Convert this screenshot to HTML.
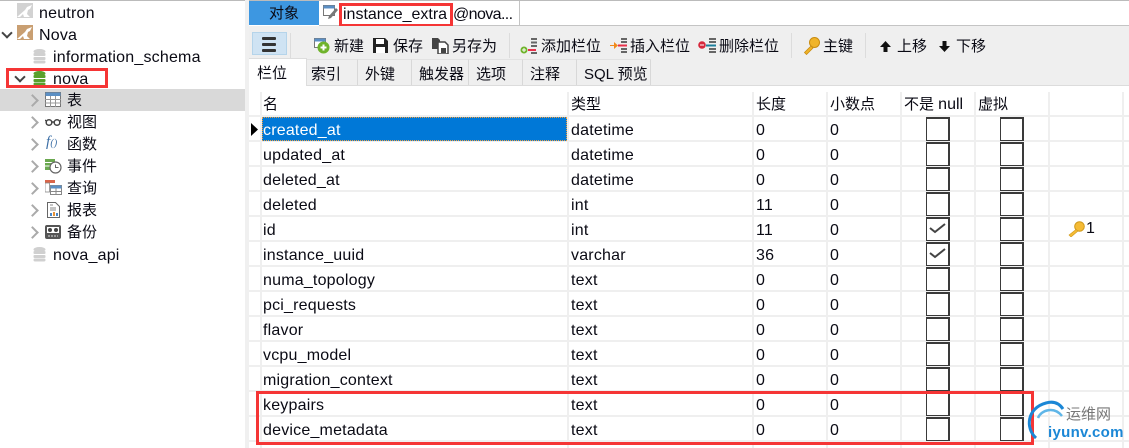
<!DOCTYPE html>
<html><head><meta charset="utf-8"><style>
html,body{margin:0;padding:0;background:#fff}
#p{position:relative;width:1129px;height:448px;overflow:hidden;background:#fff;font:16px "Liberation Sans","Noto Sans CJK SC",sans-serif;color:#0a0a14}
#p div,#p span,#p svg{position:absolute}
.t{white-space:nowrap;line-height:20px;height:20px;letter-spacing:.2px}
.z{font-size:15px;letter-spacing:0;margin-top:1px}
.h{height:2px;background:#efefef;left:249px;width:880px}
.v{width:2px;background:#efefef;top:92px;height:356px}
.cb{width:21px;height:21px;border:solid #3a3a3a;border-width:2px 2px 1px 1px;background:#fff;left:926px}
.cb2{left:1000px}
.tab{top:59px;height:26px;background:#efefef;border-right:1px solid #d8d8d8;border-top:1px solid #e2e2e2;box-sizing:border-box;text-align:left;line-height:29px;font-size:15px}
.chev{width:7px;height:7px;border-right:2px solid #aaa;border-bottom:2px solid #aaa;transform:rotate(-45deg);left:28px}
.down{width:6px;height:6px;border-right:2px solid #444;border-bottom:2px solid #444;transform:rotate(45deg)}
.red{border:3px solid #f53535;box-sizing:border-box}
</style></head><body><div id="p">

<!-- sidebar -->
<div style="left:0;top:0;width:245px;height:1px;background:#bbb"></div>
<div style="left:0;top:89px;width:245px;height:22px;background:#d9d9d9"></div>
<div style="left:245px;top:0;width:4px;height:448px;background:#f0f0f0"></div>

<svg style="left:17px;top:3px" width="17" height="16"><rect width="16" height="15" y="0" fill="#d2d2d2"/><path d="M0 14l8-7 2-3 5-2-2 4-2 1-1 4 3 3H7l-1-3-3 3z" fill="#fff"/></svg>
<span class="t" style="left:39px;top:4px">neutron</span>
<div class="down" style="left:3px;top:29px"></div>
<svg style="left:17px;top:25px" width="17" height="16"><rect width="16" height="15" fill="#c99f72"/><path d="M0 14l8-7 2-3 5-2-2 4-2 1-1 4 3 3H7l-1-3-3 3z" fill="#fff"/></svg>
<span class="t" style="left:39px;top:26px">Nova</span>

<svg style="left:33px;top:49px" width="13" height="15"><ellipse cx="6.500" cy="2.500" rx="6" ry="2.500" fill="#d0d0d0"/><rect x=".5" y="4" width="12" height="3" rx="1" fill="#d0d0d0"/><rect x=".5" y="8" width="12" height="3" rx="1" fill="#d0d0d0"/><rect x=".5" y="11.500" width="12" height="3" rx="1.500" fill="#d0d0d0"/></svg>
<span class="t" style="left:53px;top:48px">information_schema</span>

<div class="down" style="left:16px;top:73px"></div>
<svg style="left:33px;top:71px" width="13" height="15"><ellipse cx="6.500" cy="2.500" rx="6" ry="2.500" fill="#5aa02c"/><rect x=".5" y="4" width="12" height="3" rx="1" fill="#5aa02c"/><rect x=".5" y="8" width="12" height="3" rx="1" fill="#5aa02c"/><rect x=".5" y="11.500" width="12" height="3" rx="1.500" fill="#5aa02c"/></svg>
<span class="t" style="left:53px;top:70px">nova</span>
<div class="red" style="left:6px;top:68px;width:102px;height:20px"></div>

<div class="chev" style="top:96px"></div>
<svg style="left:45px;top:92px" width="16" height="15"><rect x=".5" y=".5" width="15" height="14" fill="#fff" stroke="#777"/><rect x=".5" y=".5" width="15" height="3.500" fill="#5b8fc4"/><path d="M0 7.500h16M0 11h16M5.500 4v11M10.500 4v11" stroke="#999"/></svg>
<span class="t z" style="left:67px;top:90px">表</span>

<div class="chev" style="top:118px"></div>
<svg style="left:45px;top:117px" width="16" height="10" fill="none" stroke="#444" stroke-width="1.500"><circle cx="4" cy="5.500" r="2.800"/><circle cx="12" cy="5.500" r="2.800"/><path d="M6.500 5h3M1 4L0 3M15 4l1-1"/></svg>
<span class="t z" style="left:67px;top:112px">视图</span>

<div class="chev" style="top:140px"></div>
<span class="t" style="left:46px;top:134px;font:italic 15px 'Liberation Serif',serif;color:#3b6ea5">f<span style="position:static;font-size:10px">()</span></span>
<span class="t z" style="left:67px;top:134px">函数</span>

<div class="chev" style="top:162px"></div>
<svg style="left:45px;top:159px" width="17" height="15"><rect x="0" y="0" width="10" height="11" fill="#6aa84f"/><path d="M0 3.500h10M0 7h10" stroke="#fff"/><circle cx="10.500" cy="8.500" r="5.500" fill="#fff" stroke="#666" stroke-width="1.200"/><path d="M10.500 5.500v3h3" stroke="#666" fill="none"/></svg>
<span class="t z" style="left:67px;top:156px">事件</span>

<div class="chev" style="top:184px"></div>
<svg style="left:45px;top:180px" width="17" height="15"><rect width="10" height="3" fill="#d9654a"/><rect x="0" y="3" width="4.500" height="9" fill="#fff" stroke="#888" stroke-width=".8"/><rect x="5.500" y="5.500" width="11" height="9" fill="#fff" stroke="#888"/><rect x="5.500" y="5.500" width="11" height="3" fill="#5b8fc4"/><path d="M11 8v7M5.500 11.500h11" stroke="#888"/></svg>
<span class="t z" style="left:67px;top:178px">查询</span>

<div class="chev" style="top:206px"></div>
<svg style="left:47px;top:202px" width="13" height="16"><path d="M.5.500h8l4 4v11H.5z" fill="#fff" stroke="#666"/><path d="M3 3h3M3 6h6M3 8h6" stroke="#888"/><rect x="3" y="11" width="2" height="3" fill="#4a86c5"/><rect x="6" y="10" width="2" height="4" fill="#e69138"/><rect x="9" y="11" width="2" height="3" fill="#4a86c5"/></svg>
<span class="t z" style="left:67px;top:200px">报表</span>

<div class="chev" style="top:228px"></div>
<svg style="left:45px;top:225px" width="16" height="14"><rect width="16" height="14" rx="2" fill="#555"/><rect x="2" y="2" width="12" height="6" fill="#fff"/><circle cx="5" cy="5" r="2" fill="#444"/><circle cx="11" cy="5" r="2" fill="#444"/><path d="M3 11h10" stroke="#ddd" stroke-dasharray="2 1"/></svg>
<span class="t z" style="left:67px;top:222px">备份</span>

<svg style="left:33px;top:247px" width="13" height="15"><ellipse cx="6.500" cy="2.500" rx="6" ry="2.500" fill="#d0d0d0"/><rect x=".5" y="4" width="12" height="3" rx="1" fill="#d0d0d0"/><rect x=".5" y="8" width="12" height="3" rx="1" fill="#d0d0d0"/><rect x=".5" y="11.500" width="12" height="3" rx="1.500" fill="#d0d0d0"/></svg>
<span class="t" style="left:53px;top:246px">nova_api</span>

<!-- top tabs -->
<div style="left:249px;top:0;width:880px;height:1px;background:#bbb"></div>
<div style="left:249px;top:1px;width:70px;height:24px;background:#3d97e1;text-align:center;line-height:25px;font-size:15px">对象</div>
<div style="left:319px;top:25px;width:810px;height:1px;background:#c4c4c4"></div>
<div style="left:519px;top:1px;width:1px;height:24px;background:#c4c4c4"></div>
<svg style="left:323px;top:5px" width="17" height="16"><rect x=".5" y=".5" width="11" height="10" fill="#fff" stroke="#777"/><rect x=".5" y=".5" width="11" height="3" fill="#5b8fc4"/><path d="M5 14l1-3 7-8 2 2-7 8z" fill="#777"/></svg>
<span class="t" style="left:343px;top:5px;letter-spacing:0">instance_extra</span>
<span class="t" style="left:453px;top:5px;letter-spacing:-.6px">@nova...</span>
<div class="red" style="left:339px;top:3px;width:114px;height:24px"></div>

<!-- toolbar -->
<div style="left:249px;top:26px;width:880px;height:59px;background:#efefef"></div>
<div style="left:252px;top:32px;width:35px;height:23px;background:#cfe3f3;border:1px solid #b5d4ea;box-sizing:border-box"></div>
<div style="left:262px;top:37px;width:14px;height:3px;background:#333;border-radius:1px"></div>
<div style="left:262px;top:43px;width:14px;height:3px;background:#333;border-radius:1px"></div>
<div style="left:262px;top:49px;width:14px;height:3px;background:#333;border-radius:1px"></div>
<div style="left:290px;top:33px;width:1px;height:25px;background:#dcdcdc"></div>

<svg style="left:314px;top:38px" width="18" height="16"><rect x=".5" y=".5" width="11" height="9" fill="#fff" stroke="#777"/><rect x=".5" y=".5" width="11" height="3" fill="#5b8fc4"/><circle cx="9.500" cy="9.500" r="6" fill="#6fb32b"/><path d="M9.500 6.500v6M6.500 9.500h6" stroke="#fff" stroke-width="2"/></svg>
<span class="t z" style="left:334px;top:36px">新建</span>
<svg style="left:373px;top:38px" width="16" height="15"><path d="M0 0h12l3 3v12H0z" fill="#222"/><rect x="3" y="1" width="8" height="5" fill="#fff"/><rect x="3" y="9" width="9" height="6" fill="#fff"/></svg>
<span class="t z" style="left:393px;top:36px">保存</span>
<svg style="left:432px;top:38px" width="17" height="16"><path d="M0 0h6l2 2v9H0z" fill="#444"/><path d="M6 4h7l3 3v9H6z" fill="#fff" stroke="#444" stroke-width="1.500"/><rect x="9" y="10" width="5" height="5" fill="#444"/></svg>
<span class="t z" style="left:452px;top:36px">另存为</span>
<div style="left:509px;top:33px;width:1px;height:25px;background:#dcdcdc"></div>

<svg style="left:520px;top:38px" width="21" height="17"><circle cx="4" cy="12" r="3.500" fill="#6fb32b"/><path d="M2 12h4M4 10v4" stroke="#fff"/><path d="M8 12h8" stroke="#e8304a" stroke-width="2"/><path d="M11 1h6M11 4.500h6M11 8h6M11 15h6" stroke="#666" stroke-width="2"/></svg>
<span class="t z" style="left:541px;top:36px">添加栏位</span>
<svg style="left:609px;top:38px" width="20" height="15"><path d="M1 7h4V4l4 3.500-4 3.500V8H1z" fill="#f08a1c"/><path d="M9 7.500h9" stroke="#e8304a" stroke-width="2"/><path d="M12 1h6M12 4h6M12 11h6M12 14h6" stroke="#666" stroke-width="2"/></svg>
<span class="t z" style="left:630px;top:36px">插入栏位</span>
<svg style="left:698px;top:38px" width="20" height="15"><circle cx="4" cy="7" r="3.800" fill="#d6283c"/><path d="M2 7h4" stroke="#fff"/><path d="M8 7.500h10" stroke="#1c7f9c" stroke-width="2"/><path d="M11 1h7M11 4h7M11 11h7M11 14h7" stroke="#666" stroke-width="2"/></svg>
<span class="t z" style="left:719px;top:36px">删除栏位</span>
<div style="left:791px;top:33px;width:1px;height:25px;background:#dcdcdc"></div>

<svg style="left:803px;top:37px" width="17" height="18"><circle cx="11.500" cy="5.500" r="5" fill="#f0b429" stroke="#c98c10"/><path d="M8 9L1.500 15.500l2 2 6.500-6.500z" fill="#f0b429" stroke="#c98c10" stroke-width=".8"/></svg>
<span class="t z" style="left:823px;top:36px">主键</span>
<div style="left:865px;top:33px;width:1px;height:25px;background:#dcdcdc"></div>

<svg style="left:880px;top:41px" width="11" height="11"><path d="M5.500 0L11 6H7.500v5h-4V6H0z" fill="#111"/></svg>
<span class="t z" style="left:897px;top:36px">上移</span>
<svg style="left:939px;top:41px" width="11" height="11"><path d="M5.500 11L11 5H7.500V0h-4v5H0z" fill="#111"/></svg>
<span class="t z" style="left:956px;top:36px">下移</span>

<!-- sub tabs -->
<div style="left:249px;top:85px;width:880px;height:1px;background:#dcdcdc"></div>
<div class="tab" style="left:249px;top:58px;width:58px;height:28px;background:#fff;border-top:1px solid #ddd;border-right:1px solid #ddd;line-height:30px;padding-left:8px">栏位</div>
<div class="tab" style="left:307px;width:51px;padding-left:4px">索引</div>
<div class="tab" style="left:358px;width:54px;padding-left:7px">外键</div>
<div class="tab" style="left:412px;width:57px;padding-left:7px">触发器</div>
<div class="tab" style="left:469px;width:54px;padding-left:7px">选项</div>
<div class="tab" style="left:523px;width:54px;padding-left:7px">注释</div>
<div class="tab" style="left:577px;width:74px;padding-left:7px">SQL 预览</div>

<!-- grid -->
<div class="v" style="left:260px"></div><div class="v" style="left:567px"></div><div class="v" style="left:752px"></div><div class="v" style="left:826px"></div><div class="v" style="left:900px"></div><div class="v" style="left:974px"></div><div class="v" style="left:1048px"></div><div class="v" style="left:1122px"></div>
<div class="h" style="top:115px"></div><div class="h" style="top:140px"></div><div class="h" style="top:165px"></div><div class="h" style="top:190px"></div><div class="h" style="top:215px"></div><div class="h" style="top:240px"></div><div class="h" style="top:265px"></div><div class="h" style="top:290px"></div><div class="h" style="top:315px"></div><div class="h" style="top:340px"></div><div class="h" style="top:365px"></div><div class="h" style="top:390px"></div><div class="h" style="top:415px"></div><div class="h" style="top:440px"></div>

<span class="t z" style="left:263px;top:94px">名</span>
<span class="t z" style="left:571px;top:94px">类型</span>
<span class="t z" style="left:756px;top:94px">长度</span>
<span class="t z" style="left:830px;top:94px">小数点</span>
<span class="t z" style="left:904px;top:94px">不是 <span style="position:static;font-size:16px">null</span></span>
<span class="t z" style="left:978px;top:94px">虚拟</span>

<svg style="left:251px;top:123px" width="8" height="13"><path d="M0 0l7 6.500L0 13z" fill="#000"/></svg>
<div style="left:262px;top:117px;width:305px;height:24px;background:#0078d7;border:1px dotted #f0a040;box-sizing:border-box"></div>

<span class="t" style="left:263px;top:121px;color:#fff">created_at</span><span class="t" style="left:571px;top:121px">datetime</span><span class="t" style="left:756px;top:121px">0</span><span class="t" style="left:830px;top:121px">0</span>
<span class="t" style="left:263px;top:146px">updated_at</span><span class="t" style="left:571px;top:146px">datetime</span><span class="t" style="left:756px;top:146px">0</span><span class="t" style="left:830px;top:146px">0</span>
<span class="t" style="left:263px;top:171px">deleted_at</span><span class="t" style="left:571px;top:171px">datetime</span><span class="t" style="left:756px;top:171px">0</span><span class="t" style="left:830px;top:171px">0</span>
<span class="t" style="left:263px;top:196px">deleted</span><span class="t" style="left:571px;top:196px">int</span><span class="t" style="left:756px;top:196px">11</span><span class="t" style="left:830px;top:196px">0</span>
<span class="t" style="left:263px;top:221px">id</span><span class="t" style="left:571px;top:221px">int</span><span class="t" style="left:756px;top:221px">11</span><span class="t" style="left:830px;top:221px">0</span>
<span class="t" style="left:263px;top:246px">instance_uuid</span><span class="t" style="left:571px;top:246px">varchar</span><span class="t" style="left:756px;top:246px">36</span><span class="t" style="left:830px;top:246px">0</span>
<span class="t" style="left:263px;top:271px">numa_topology</span><span class="t" style="left:571px;top:271px">text</span><span class="t" style="left:756px;top:271px">0</span><span class="t" style="left:830px;top:271px">0</span>
<span class="t" style="left:263px;top:296px">pci_requests</span><span class="t" style="left:571px;top:296px">text</span><span class="t" style="left:756px;top:296px">0</span><span class="t" style="left:830px;top:296px">0</span>
<span class="t" style="left:263px;top:321px">flavor</span><span class="t" style="left:571px;top:321px">text</span><span class="t" style="left:756px;top:321px">0</span><span class="t" style="left:830px;top:321px">0</span>
<span class="t" style="left:263px;top:346px">vcpu_model</span><span class="t" style="left:571px;top:346px">text</span><span class="t" style="left:756px;top:346px">0</span><span class="t" style="left:830px;top:346px">0</span>
<span class="t" style="left:263px;top:371px">migration_context</span><span class="t" style="left:571px;top:371px">text</span><span class="t" style="left:756px;top:371px">0</span><span class="t" style="left:830px;top:371px">0</span>
<span class="t" style="left:263px;top:396px">keypairs</span><span class="t" style="left:571px;top:396px">text</span><span class="t" style="left:756px;top:396px">0</span><span class="t" style="left:830px;top:396px">0</span>
<span class="t" style="left:263px;top:421px">device_metadata</span><span class="t" style="left:571px;top:421px">text</span><span class="t" style="left:756px;top:421px">0</span><span class="t" style="left:830px;top:421px">0</span>

<div class="cb" style="top:117px"></div><div class="cb cb2" style="top:117px"></div>
<div class="cb" style="top:142px"></div><div class="cb cb2" style="top:142px"></div>
<div class="cb" style="top:167px"></div><div class="cb cb2" style="top:167px"></div>
<div class="cb" style="top:192px"></div><div class="cb cb2" style="top:192px"></div>
<div class="cb" style="top:217px"></div><div class="cb cb2" style="top:217px"></div>
<div class="cb" style="top:242px"></div><div class="cb cb2" style="top:242px"></div>
<div class="cb" style="top:267px"></div><div class="cb cb2" style="top:267px"></div>
<div class="cb" style="top:292px"></div><div class="cb cb2" style="top:292px"></div>
<div class="cb" style="top:317px"></div><div class="cb cb2" style="top:317px"></div>
<div class="cb" style="top:342px"></div><div class="cb cb2" style="top:342px"></div>
<div class="cb" style="top:367px"></div><div class="cb cb2" style="top:367px"></div>
<div class="cb" style="top:392px"></div><div class="cb cb2" style="top:392px"></div>
<div class="cb" style="top:417px"></div><div class="cb cb2" style="top:417px"></div>

<svg style="left:929px;top:221px" width="18" height="14" fill="none" stroke="#444" stroke-width="2"><path d="M1 7l5 4 10-8"/></svg>
<svg style="left:929px;top:246px" width="18" height="14" fill="none" stroke="#444" stroke-width="2"><path d="M1 7l5 4 10-8"/></svg>

<svg style="left:1068px;top:221px" width="17" height="16"><circle cx="11.500" cy="5.500" r="4.800" fill="#f5bb35" stroke="#d09a1c"/><path d="M8 8.500L1 14l2 2 7-6z" fill="#f5bb35" stroke="#d09a1c" stroke-width=".6"/></svg>
<span class="t" style="left:1086px;top:219px">1</span>

<div class="red" style="left:256px;top:391px;width:778px;height:54px"></div>

<!-- watermark -->
<svg style="left:1024px;top:398px" width="50" height="50" fill="none"><path d="M12 40C1 30 3 10 22 5c7-2 13 0 17 6" stroke="#1b87d6" stroke-width="3"/><path d="M14 20c3-8 16-12 24-2" stroke="#5fb6e8" stroke-width="2.500"/></svg>
<span class="t" style="left:1066px;top:405px;font-size:15px;letter-spacing:0;color:#777">运维网</span>
<span class="t" style="left:1048px;top:423px;font-size:15px;font-weight:bold;color:#1b87d6;letter-spacing:.3px">iyunv.com</span>

</div></body></html>
